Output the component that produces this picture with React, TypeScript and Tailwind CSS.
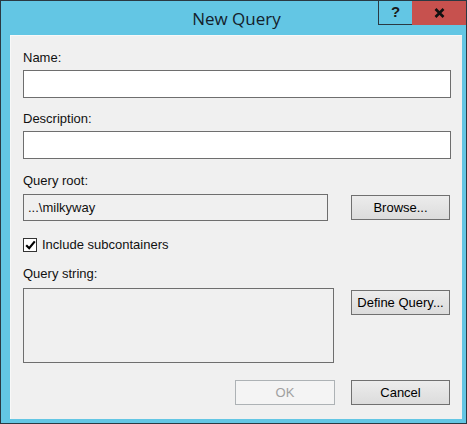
const label = 'block h-4 text-[13px] leading-4 text-[#111]';
const btn =
  'flex h-[25px] w-[99px] items-center justify-center border border-[#707070] bg-gradient-to-b from-[#ececec] to-[#dcdcdc] text-[13px] text-black';

export default function App() {
  return (
    <div
      className="flex h-[424px] w-[467px] flex-col border border-[#2a3942] bg-[#63c6e4]"
      style={{ fontFamily: '"Liberation Sans", Arial, sans-serif' }}
    >
      {/* title bar */}
      <div className="flex h-[34px]">
        <div
          className="flex flex-1 items-center justify-center pl-[94px] pt-[1px] text-[17px] text-[#14212b]"
          style={{ fontFamily: '"Open Sans", "Noto Sans", sans-serif' }}
        >
          New Query
        </div>
        <div className="flex h-[24px] self-start">
          <div className="flex w-[34px] items-center justify-center border-b border-l border-[#2a3942] pb-[1px] text-[15px] font-bold text-[#1a1a1a]">
            ?
          </div>
          <div className="flex w-[54px] items-center justify-center bg-[#c7514e] text-[15px] font-bold text-black">
            <svg width="11" height="10" viewBox="0 0 11 10">
              <path d="M1.5 1 L9.5 9 M9.5 1 L1.5 9" stroke="#111" strokeWidth="2.6" />
            </svg>
          </div>
        </div>
      </div>

      {/* dialog body */}
      <div className="mb-[4px] ml-[9px] mr-[4px] flex flex-1 flex-col border-l border-t border-[#f8f8f8] bg-[#f0f0f0] pl-[12px] pr-[10px]">
        <span className={`${label} mt-[14px]`}>Name:</span>
        <div className="mt-[4px] h-[28px] w-[428px] border border-[#6e6e6e] bg-white" />

        <span className={`${label} mt-[13px]`}>Description:</span>
        <div className="mt-[4px] h-[28px] w-[428px] border border-[#6e6e6e] bg-white" />

        <span className={`${label} mt-[14px]`}>Query root:</span>
        <div className="mt-[5px] flex items-start justify-between pr-[2px]">
          <div className="flex h-[27px] w-[305px] items-center border border-[#6e6e6e] bg-[#f0f0f0] pl-[4px] text-[13px] text-[#111]">
            ...\milkyway
          </div>
          <div className={`${btn} mt-[1px]`}>Browse...</div>
        </div>

        <div className="mt-[16px] flex items-center gap-[5px]">
          <div className="flex h-[14px] w-[14px] items-center justify-center border border-[#333] bg-white">
            <svg width="11" height="10" viewBox="0 0 11 10">
              <path d="M1.2 5.2 L4.2 8.2 L9.8 1.4" fill="none" stroke="#000" strokeWidth="2.2" />
            </svg>
          </div>
          <span className="text-[13px] leading-4 text-[#111]">Include subcontainers</span>
        </div>

        <span className={`${label} mt-[13px]`}>Query string:</span>
        <div className="mt-[6px] flex items-start justify-between pr-[2px]">
          <div className="h-[75px] w-[311px] border border-[#6e6e6e] bg-[#f0f0f0]" />
          <div className={`${btn} mt-[2px] border-[#3c7fb1]`}>Define Query...</div>
        </div>

        <div className="mt-[17px] flex justify-end gap-[16px] pr-[2px]">
          <div className="flex h-[25px] w-[100px] items-center justify-center border border-[#adb2b5] bg-[#f4f4f4] text-[13px] text-[#a0a0a0]">
            OK
          </div>
          <div className={btn}>Cancel</div>
        </div>
      </div>
    </div>
  );
}
